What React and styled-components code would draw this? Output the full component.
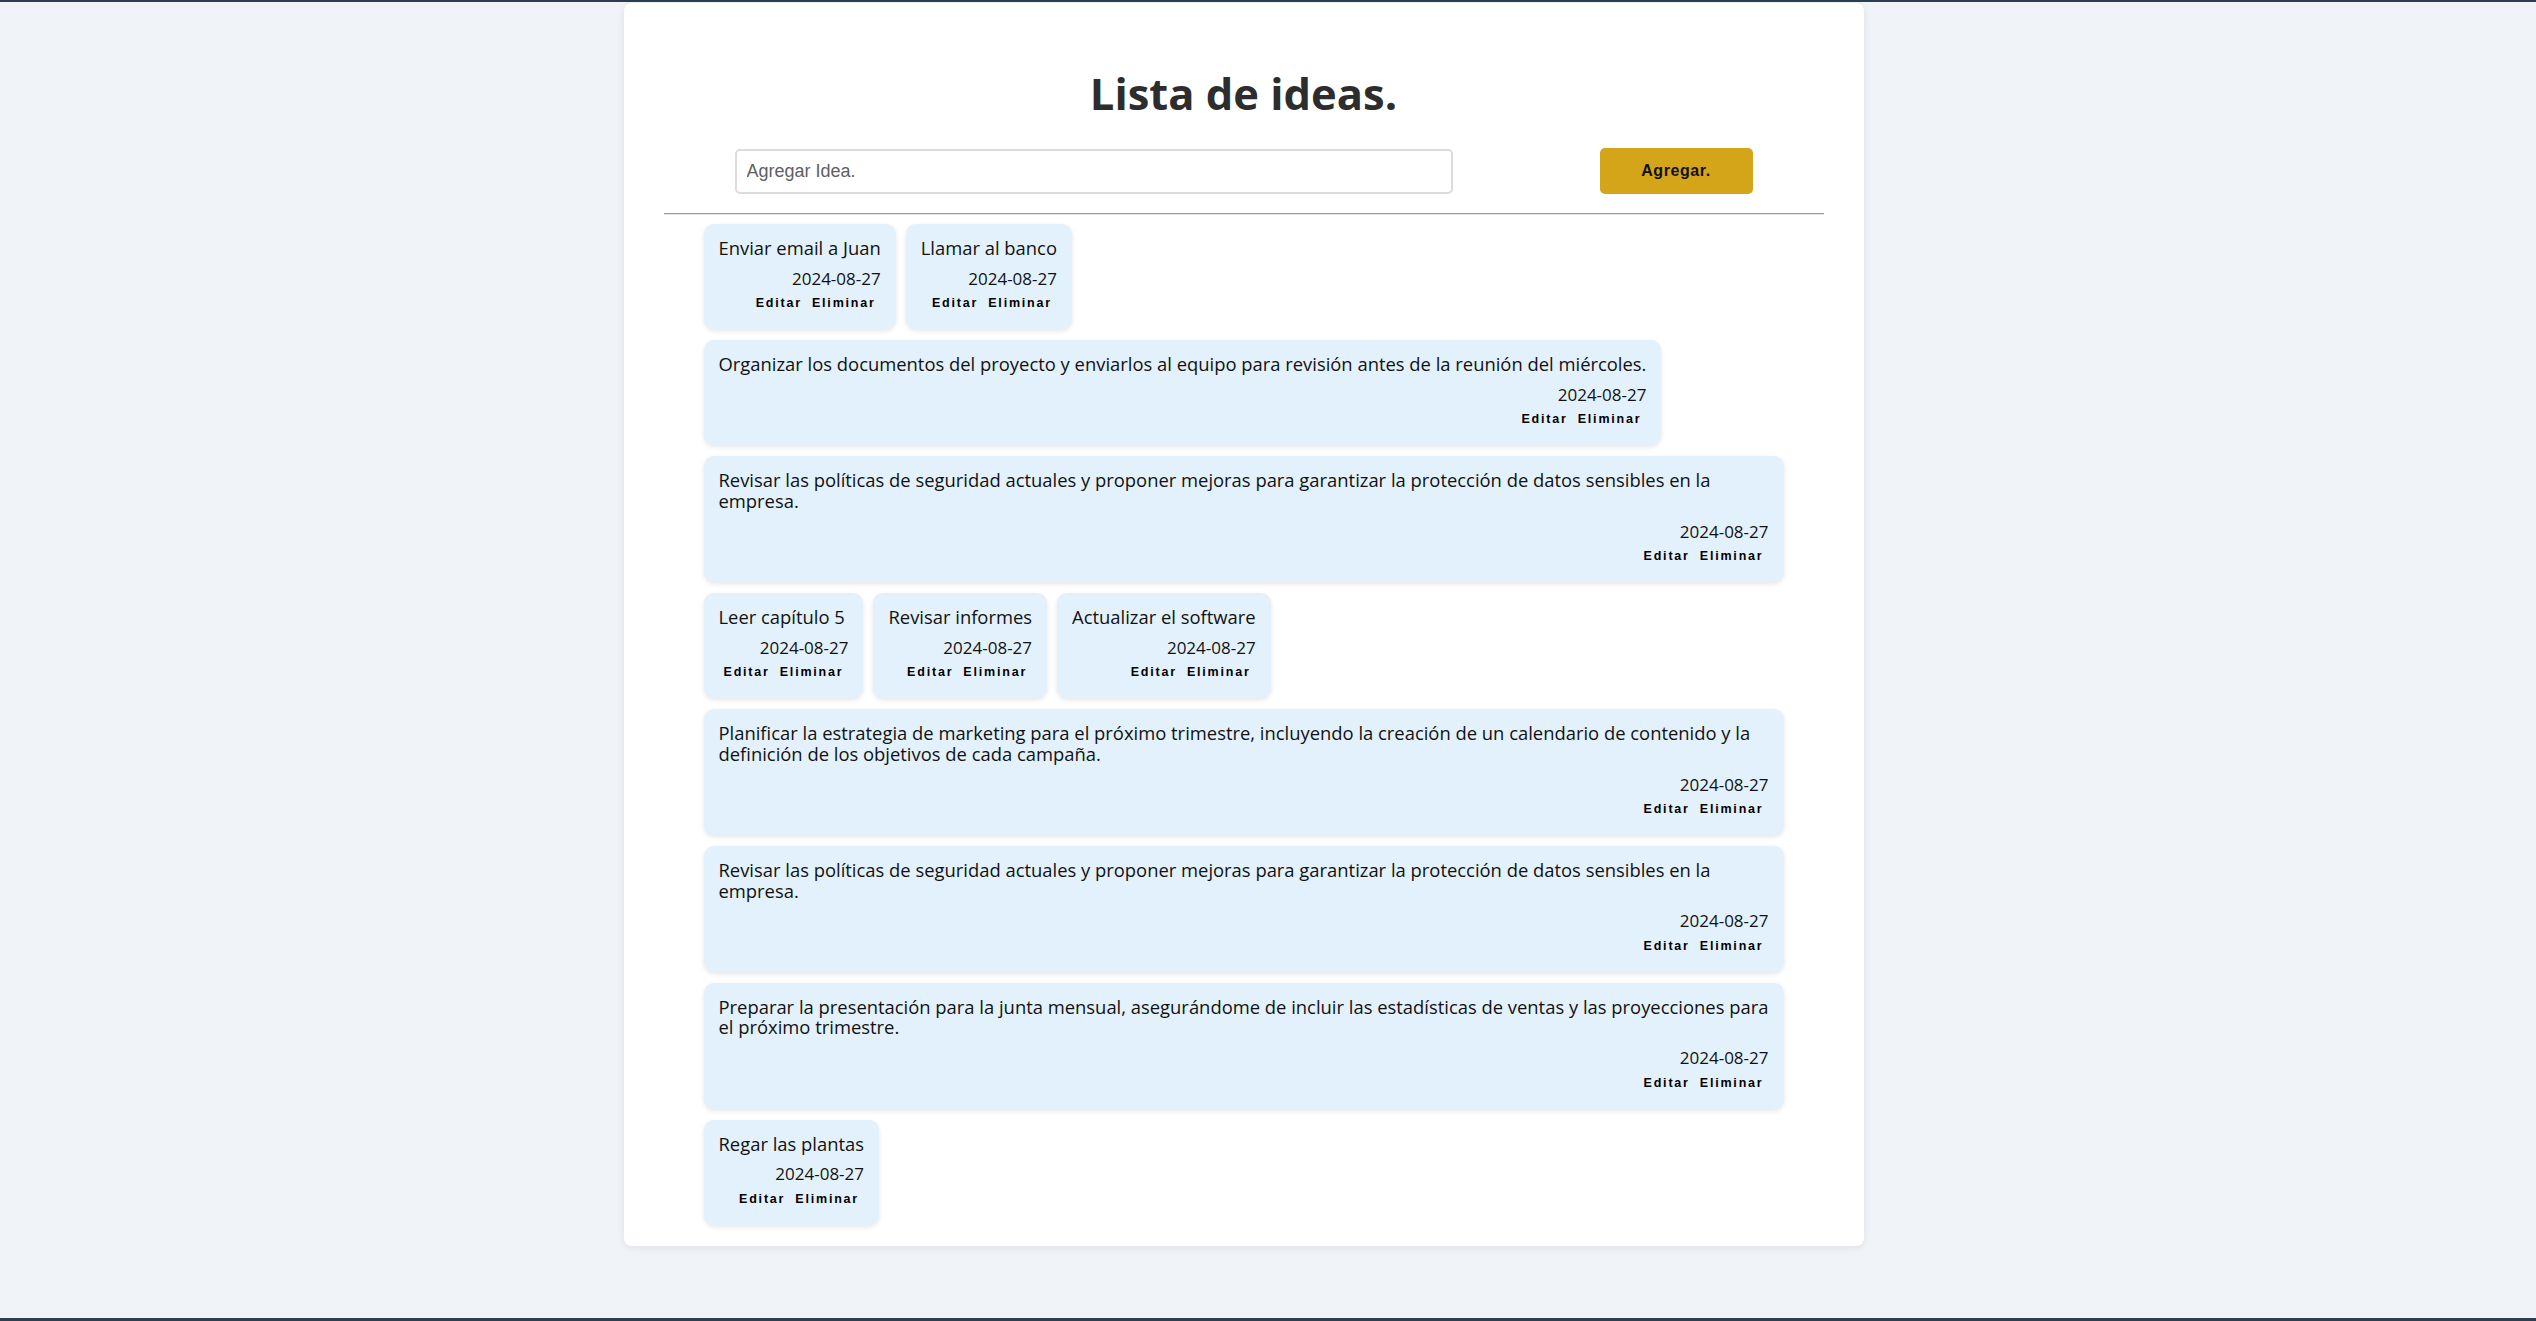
import styled, { createGlobalStyle } from "styled-components";

const GlobalStyle = createGlobalStyle`
  html, body {
    margin: 0;
    padding: 0;
  }
  body {
    background: #f0f3f8;
    font-family: "Open Sans", "DejaVu Sans", sans-serif;
  }
  * {
    box-sizing: border-box;
  }
`;

const ideas = [
  { id: 1, text: "Enviar email a Juan", date: "2024-08-27" },
  { id: 2, text: "Llamar al banco", date: "2024-08-27" },
  {
    id: 3,
    text: "Organizar los documentos del proyecto y enviarlos al equipo para revisión antes de la reunión del miércoles.",
    date: "2024-08-27",
  },
  {
    id: 4,
    text: "Revisar las políticas de seguridad actuales y proponer mejoras para garantizar la protección de datos sensibles en la empresa.",
    date: "2024-08-27",
  },
  { id: 5, text: "Leer capítulo 5", date: "2024-08-27" },
  { id: 6, text: "Revisar informes", date: "2024-08-27" },
  { id: 7, text: "Actualizar el software", date: "2024-08-27" },
  {
    id: 8,
    text: "Planificar la estrategia de marketing para el próximo trimestre, incluyendo la creación de un calendario de contenido y la definición de los objetivos de cada campaña.",
    date: "2024-08-27",
  },
  {
    id: 9,
    text: "Revisar las políticas de seguridad actuales y proponer mejoras para garantizar la protección de datos sensibles en la empresa.",
    date: "2024-08-27",
  },
  {
    id: 10,
    text: "Preparar la presentación para la junta mensual, asegurándome de incluir las estadísticas de ventas y las proyecciones para el próximo trimestre.",
    date: "2024-08-27",
  },
  { id: 11, text: "Regar las plantas", date: "2024-08-27" },
];

function App() {
  return (
    <Page>
      <GlobalStyle />
      <Container>
        <Title>Lista de ideas.</Title>
        <Form onSubmit={(e) => e.preventDefault()}>
          <Input placeholder="Agregar Idea." />
          <AddButton type="submit">Agregar.</AddButton>
        </Form>
        <Divider />
        <List>
          {ideas.map((idea) => (
            <Card key={idea.id}>
              <IdeaText>{idea.text}</IdeaText>
              <IdeaDate>{idea.date}</IdeaDate>
              <Actions>
                <ActionButton>Editar</ActionButton>
                <ActionButton>Eliminar</ActionButton>
              </Actions>
            </Card>
          ))}
        </List>
      </Container>
    </Page>
  );
}

export default App;

const Page = styled.div`
  min-height: 100vh;
  display: flex;
  justify-content: center;
  align-items: flex-start;
  padding: 1px 49px 0 0;
  border-top: 2px solid #2c3e50;
  border-bottom: 3px solid #2c3e50;
`;

const Container = styled.div`
  width: 1240px;
  background: #fff;
  border-radius: 8px;
  box-shadow: 0 2px 8px rgba(0, 0, 0, 0.08);
  padding-bottom: 21px;
`;

const Title = styled.h1`
  margin: 0;
  padding-top: 61px;
  text-align: center;
  font-family: "Open Sans", sans-serif;
  font-weight: 700;
  font-size: 43.5px;
  line-height: 60px;
  color: #2d2d2d;
`;

const Form = styled.form`
  display: flex;
  justify-content: space-between;
  align-items: center;
  padding: 0 111px;
  margin-top: 24px;
`;

const Input = styled.input`
  width: 718px;
  height: 45px;
  border: 2px solid #dcdcdc;
  border-radius: 5px;
  padding: 0 10px;
  font-family: "Liberation Sans", Arial, sans-serif;
  font-size: 18px;
  color: #333;
  outline: none;

  &::placeholder {
    color: #5f5f5f;
  }
`;

const AddButton = styled.button`
  width: 153px;
  height: 46px;
  background: #d4a519;
  border: none;
  border-radius: 5px;
  font-family: "Liberation Sans", Arial, sans-serif;
  font-weight: 700;
  font-size: 16px;
  letter-spacing: 0.6px;
  color: #111;
  cursor: pointer;
`;

const Divider = styled.hr`
  margin: 19px 40px 0;
  border: 0;
  border-top: 1px solid #9a9a9a;
  border-bottom: 1px solid #e6e6e6;
`;

const List = styled.div`
  display: flex;
  flex-wrap: wrap;
  align-items: flex-start;
  gap: 11px 10px;
  padding: 0 80px;
  margin-top: 9px;
`;

const Card = styled.div`
  display: flex;
  flex-direction: column;
  max-width: 100%;
  background: #e3f1fc;
  border-radius: 10px;
  padding: 14px 15px 15px;
  box-shadow: 0 2px 5px rgba(0, 0, 0, 0.1);
`;

const IdeaText = styled.p`
  margin: 0;
  font-size: 18.4px;
  line-height: 20.7px;
  color: #111;
`;

const IdeaDate = styled.span`
  margin-top: 10px;
  text-align: right;
  font-size: 17px;
  line-height: 20.4px;
  color: #111;
`;

const Actions = styled.div`
  display: flex;
  justify-content: flex-end;
  margin-top: 3px;
`;

const ActionButton = styled.button`
  background: none;
  border: 0;
  padding: 4px 5px;
  font-family: "Liberation Sans", Arial, sans-serif;
  font-weight: 700;
  font-size: 12.5px;
  letter-spacing: 1.8px;
  color: #000;
  cursor: pointer;
`;
